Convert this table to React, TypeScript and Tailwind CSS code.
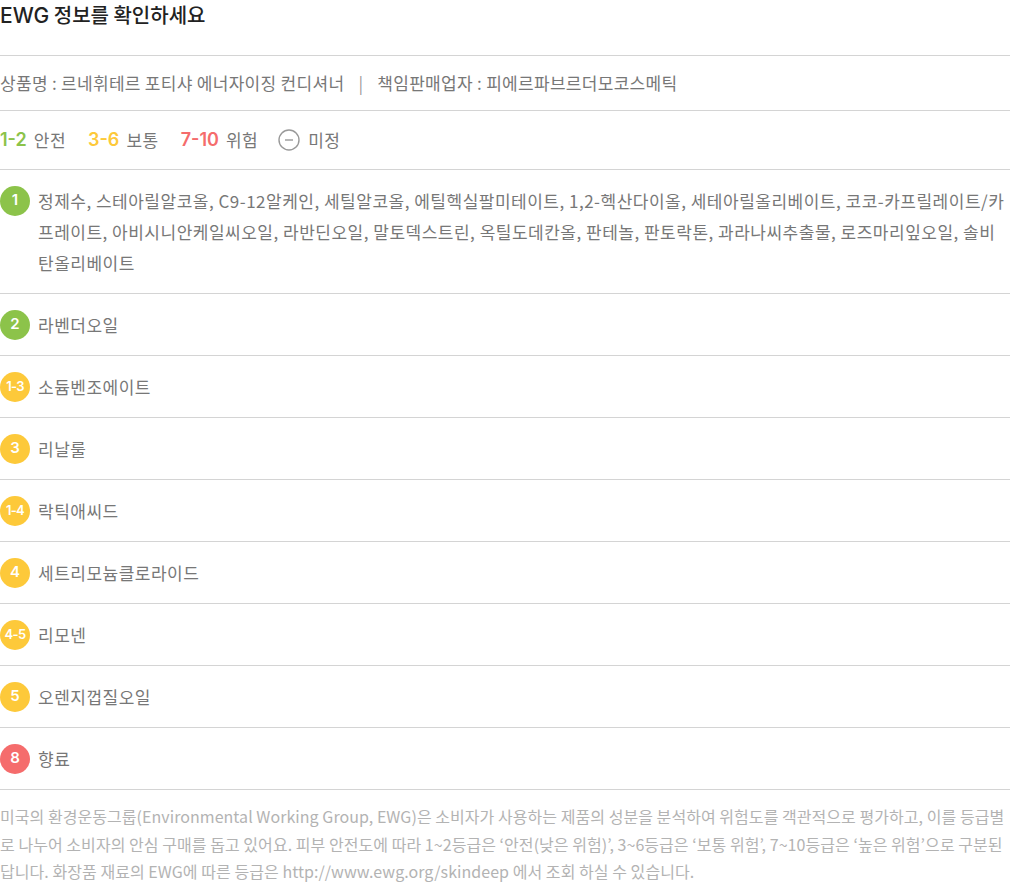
const KR = "font-['Noto_Sans_CJK_KR',sans-serif]"
const LAT = "font-['Inter','Noto_Sans_CJK_KR',sans-serif]"

type Row = { grade: string; color: string; name: string }

const rows: Row[] = [
  {
    grade: '1',
    color: 'bg-[#8cc34a]',
    name: '정제수, 스테아릴알코올, C9-12알케인, 세틸알코올, 에틸헥실팔미테이트, 1,2-헥산다이올, 세테아릴올리베이트, 코코-카프릴레이트/카프레이트, 아비시니안케일씨오일, 라반딘오일, 말토덱스트린, 옥틸도데칸올, 판테놀, 판토락톤, 과라나씨추출물, 로즈마리잎오일, 솔비탄올리베이트',
  },
  { grade: '2', color: 'bg-[#8cc34a]', name: '라벤더오일' },
  { grade: '1-3', color: 'bg-[#fdc93a]', name: '소듐벤조에이트' },
  { grade: '3', color: 'bg-[#fdc93a]', name: '리날룰' },
  { grade: '1-4', color: 'bg-[#fdc93a]', name: '락틱애씨드' },
  { grade: '4', color: 'bg-[#fdc93a]', name: '세트리모늄클로라이드' },
  { grade: '4-5', color: 'bg-[#fdc93a]', name: '리모넨' },
  { grade: '5', color: 'bg-[#fdc93a]', name: '오렌지껍질오일' },
  { grade: '8', color: 'bg-[#f56c6c]', name: '향료' },
]

function Badge({ grade, color }: { grade: string; color: string }) {
  const small = grade.length > 1
  return (
    <span
      className={`${color} ${LAT} mt-[0.5px] flex h-[30px] w-[30px] flex-shrink-0 items-center justify-center rounded-full font-semibold text-white ${small ? 'text-[13px] tracking-[-0.7px]' : 'text-[15px]'}`}
    >
      {grade}
    </span>
  )
}

export default function App() {
  return (
    <div className={`${KR} w-[1010px] bg-white`}>
      <h2 className="border-b border-[#d4d4d4] pb-[24px] text-[20px] leading-[30px] font-medium text-[#222]">
        <span className={`${LAT} text-[21px]`}>EWG</span> 정보를 확인하세요
      </h2>

      <div className="border-b border-[#d4d4d4] py-[15px] text-[17px] leading-[24px] tracking-[0.3px] text-[#777]">
        상품명 : 르네휘테르 포티샤 에너자이징 컨디셔너
        <span className="mx-[14px] text-[#999]">|</span>
        책임판매업자 : 피에르파브르더모코스메틱
      </div>

      <div className="flex items-center border-b border-[#d4d4d4] py-[16px] text-[17px] leading-[26px] tracking-[0.5px] text-[#777]">
        <span className={`${LAT} text-[18px] font-semibold tracking-normal text-[#8cc34a]`}>1-2</span>
        <span className="ml-[7px]">안전</span>
        <span className={`${LAT} ml-[22px] text-[18px] font-semibold tracking-normal text-[#fdc93a]`}>3-6</span>
        <span className="ml-[7px]">보통</span>
        <span className={`${LAT} ml-[22px] text-[18px] font-semibold tracking-normal text-[#f56c6c]`}>7-10</span>
        <span className="ml-[7px]">위험</span>
        <svg className="ml-[20px]" width="22" height="22" viewBox="0 0 22 22" fill="none">
          <circle cx="11" cy="11" r="10" stroke="#999" strokeWidth="1.4" />
          <line x1="7" y1="11" x2="15" y2="11" stroke="#999" strokeWidth="1.4" />
        </svg>
        <span className="ml-[8px]">미정</span>
      </div>

      {rows.map((r) => (
        <div key={r.name} className="flex items-start gap-[8px] border-b border-[#d4d4d4] py-[15px]">
          <Badge grade={r.grade} color={r.color} />
          <p className="text-[17px] leading-[31px] tracking-[0.5px] text-[#777]">{r.name}</p>
        </div>
      ))}

      <p className="pt-[13px] text-[16px] leading-[27.5px] tracking-[0.05px] text-[#b3b3b3]">
        미국의 환경운동그룹(Environmental Working Group, EWG)은 소비자가 사용하는 제품의 성분을 분석하여 위험도를 객관적으로 평가하고, 이를 등급별로 나누어 소비자의 안심 구매를 돕고 있어요. 피부 안전도에 따라 1~2등급은 ‘안전(낮은 위험)’, 3~6등급은 ‘보통 위험’, 7~10등급은 ‘높은 위험’으로 구분된답니다. 화장품 재료의 EWG에 따른 등급은 http://www.ewg.org/skindeep 에서 조회 하실 수 있습니다.
      </p>
    </div>
  )
}
